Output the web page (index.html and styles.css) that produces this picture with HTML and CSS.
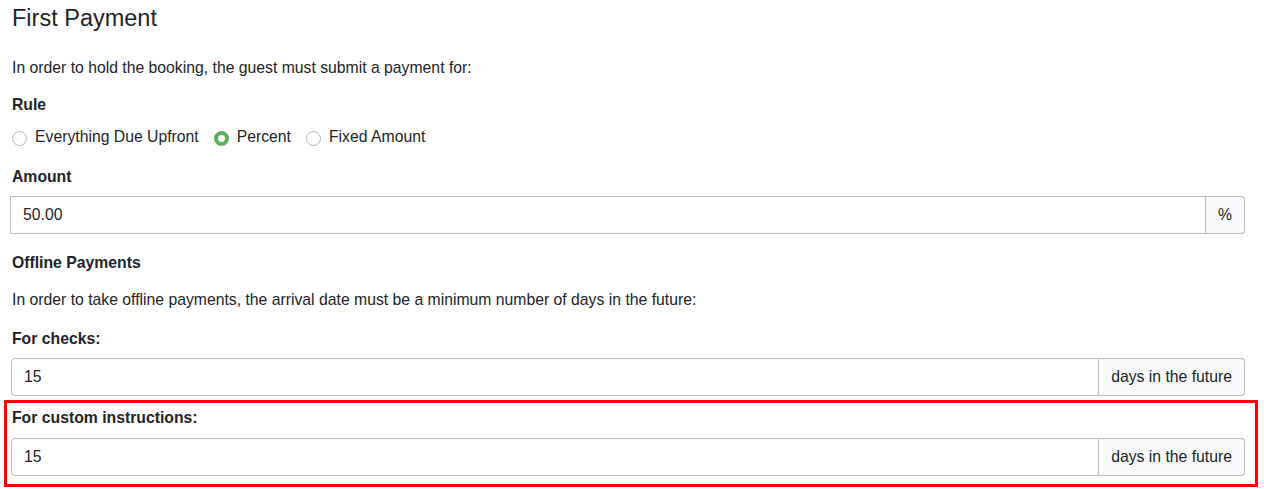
FILE: index.html
```html
<!DOCTYPE html>
<html>
<head>
<meta charset="utf-8">
<link rel="stylesheet" href="styles.css">
</head>
<body>
<div class="page">
  <h3 class="title">First Payment</h3>
  <p class="text p1">In order to hold the booking, the guest must submit a payment for:</p>
  <div class="label rule-label">Rule</div>
  <div class="radios">
    <label class="radio"><span class="dot"></span>Everything Due Upfront</label>
    <label class="radio"><span class="dot checked"></span>Percent</label>
    <label class="radio"><span class="dot"></span>Fixed Amount</label>
  </div>
  <div class="label amount-label">Amount</div>
  <div class="group square">
    <div class="field">50.00</div>
    <div class="addon">%</div>
  </div>
  <div class="label offline-label">Offline Payments</div>
  <p class="text p2">In order to take offline payments, the arrival date must be a minimum number of days in the future:</p>
  <div class="label checks-label">For checks:</div>
  <div class="group">
    <div class="field">15</div>
    <div class="addon">days in the future</div>
  </div>
  <div class="highlight">
    <div class="label custom-label">For custom instructions:</div>
    <div class="group">
      <div class="field">15</div>
      <div class="addon">days in the future</div>
    </div>
  </div>
</div>
</body>
</html>
```
FILE: styles.css
```css
html, body {
  margin: 0;
  padding: 0;
  background: #fff;
}
body {
  font-family: "Liberation Sans", Arial, sans-serif;
  font-size: 15.75px;
  line-height: 20px;
  color: #212529;
}
.page {
  width: 1234px;
  margin-left: 11px;
  padding-top: 3px;
}
.title {
  margin: 0;
  font-size: 23.5px;
  line-height: 27px;
  padding-top: 2px;
  font-weight: normal;
  padding-left: 1px;
}
.text {
  margin: 0;
  padding-left: 1px;
  padding-top: 2px;
  line-height: 18px;
}
.p1 { margin-top: 25px; }
.label {
  font-weight: bold;
  padding-left: 1px;
  padding-top: 2px;
  line-height: 18px;
}
.rule-label { margin-top: 17px; }
.radios {
  display: flex;
  margin-top: 12px;
  padding-left: 1px;
  height: 20px;
}
.radio {
  display: flex;
  align-items: center;
  margin-right: 15px;
  padding-top: 2px;
  line-height: 18px;
}
.dot {
  box-sizing: border-box;
  width: 15px;
  height: 15px;
  border: 1px solid #adb5bd;
  border-radius: 50%;
  margin-right: 8px;
  margin-top: 2px;
  background: #fff;
}
.dot.checked {
  border: 4px solid #5cb05c;
}
.amount-label { margin-top: 20px; }
.group {
  display: flex;
  margin-top: 10px;
  height: 38px;
  box-sizing: border-box;
}
.field {
  flex: 1;
  box-sizing: border-box;
  border: 1px solid #b8bec4;
  border-radius: 4px 0 0 4px;
  padding: 0 12px;
  display: flex;
  align-items: center;
  background: #fff;
}
.addon {
  box-sizing: border-box;
  border: 1px solid #b8bec4;
  border-left: none;
  border-radius: 0 4px 4px 0;
  background: #f8f9fa;
  padding: 0 12px;
  display: flex;
  align-items: center;
}
.group.square .field {
  border-radius: 0;
  margin-left: -1px;
}
.offline-label { margin-top: 18px; }
.p2 { margin-top: 17px; }
.checks-label { margin-top: 19px; }
.highlight {
  position: relative;
  margin-top: 11px;
  padding-bottom: 11px;
}
.highlight .group { margin-top: 11px; }
.highlight::before {
  content: "";
  position: absolute;
  left: -7px;
  right: -13px;
  top: -7px;
  bottom: 0;
  border: 3px solid #ff0000;
  pointer-events: none;
}
.custom-label { margin-top: 0; }
```
